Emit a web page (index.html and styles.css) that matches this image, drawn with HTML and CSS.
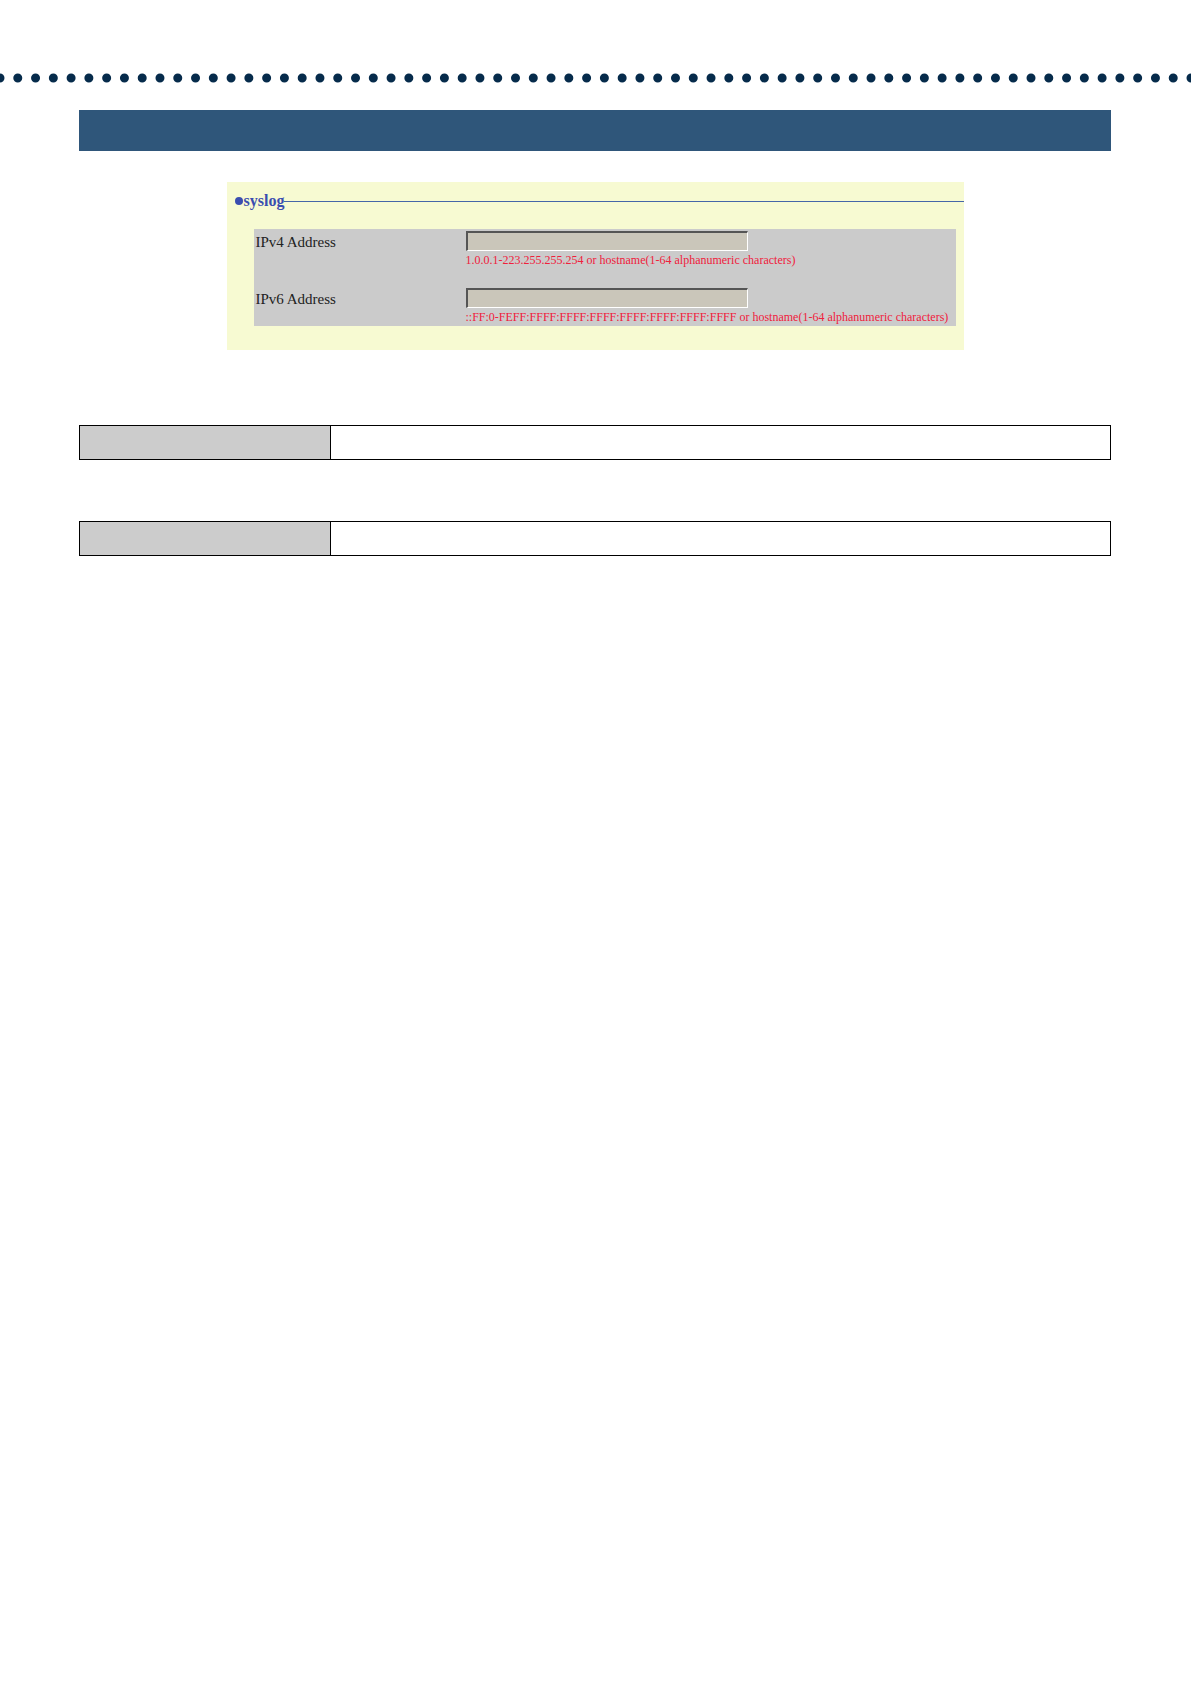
FILE: index.html
```html
<!DOCTYPE html>
<html lang="en">
<head>
<meta charset="utf-8">
<meta name="viewport" content="width=device-width, initial-scale=1">
<title>syslog</title>
<link rel="stylesheet" href="styles.css">
</head>
<body>
<svg class="dots" aria-hidden="true"><line x1="0" y1="5" x2="100%" y2="5" pathLength="67"/></svg>
<main class="page">
  <div class="banner"></div>
  <form class="panel">
    <h1 class="title"><span class="bullet"></span>syslog</h1>
    <div class="fields">
      <label class="label" for="ipv4">IPv4 Address</label>
      <div class="entry">
        <input class="box" id="ipv4" type="text" aria-describedby="hint4">
        <span class="hint" id="hint4">1.0.0.1-223.255.255.254 or hostname(1-64 alphanumeric characters)</span>
      </div>
      <label class="label" for="ipv6">IPv6 Address</label>
      <div class="entry">
        <input class="box" id="ipv6" type="text" aria-describedby="hint6">
        <span class="hint" id="hint6">::FF:0-FEFF:FFFF:FFFF:FFFF:FFFF:FFFF:FFFF:FFFF or hostname(1-64 alphanumeric characters)</span>
      </div>
    </div>
  </form>
  <div class="tables">
    <table class="spec"><tr><th scope="row"></th><td></td></tr></table>
    <table class="spec"><tr><th scope="row"></th><td></td></tr></table>
  </div>
</main>
</body>
</html>
```
FILE: styles.css
```css
* { box-sizing: border-box; }
body {
  margin: 0;
  padding-top: 73px;
  background: #fff;
  color: #222;
  font-family: "Liberation Serif", "Times New Roman", serif;
}
.dots { display: block; width: 100%; height: 10px; }
.dots line {
  stroke: #062b4b;
  stroke-width: 9px;
  stroke-linecap: round;
  stroke-dasharray: 0 1;
}
.page { padding: 27px 80px 0 79px; }
.banner { height: 41px; background: #2f567a; }
.panel {
  max-width: 737px;
  margin: 31px auto 0;
  padding: 8px 0 24px;
  background: #f7fad2;
}
.title {
  display: flex;
  align-items: center;
  margin: 0;
  padding-left: 8px;
  font-size: 16px;
  line-height: 22px;
  color: #3a4db0;
}
.title::after { content: ""; flex: 1; height: 1px; background: #4666a8; }
.bullet { width: 8px; height: 8px; margin-right: 1px; border-radius: 50%; background: #3a4db0; }
.fields {
  display: grid;
  grid-template-columns: 210px 1fr;
  row-gap: 19px;
  margin: 17px 8px 0 27px;
  padding: 2px 0 0 2px;
  background: #cbcbcb;
}
.label { font-size: 15px; line-height: 22px; }
.entry { display: flex; flex-direction: column; align-items: flex-start; }
.box {
  width: 282px;
  max-width: 100%;
  height: 20px;
  padding: 0 2px;
  border: 2px solid;
  border-color: #555 #fff #fff #555;
  border-right-width: 1px;
  border-bottom-width: 1px;
  background: #cac6ba;
  font: inherit;
}
.hint { font-size: 12px; line-height: 18px; color: #f0203c; }
.tables { display: grid; row-gap: 61px; margin-top: 75px; }
.spec { width: 100%; border-collapse: collapse; table-layout: fixed; }
.spec th, .spec td { height: 34px; padding: 0; border: 1px solid #000; }
.spec th { width: 251px; background: #ccc; }
```
